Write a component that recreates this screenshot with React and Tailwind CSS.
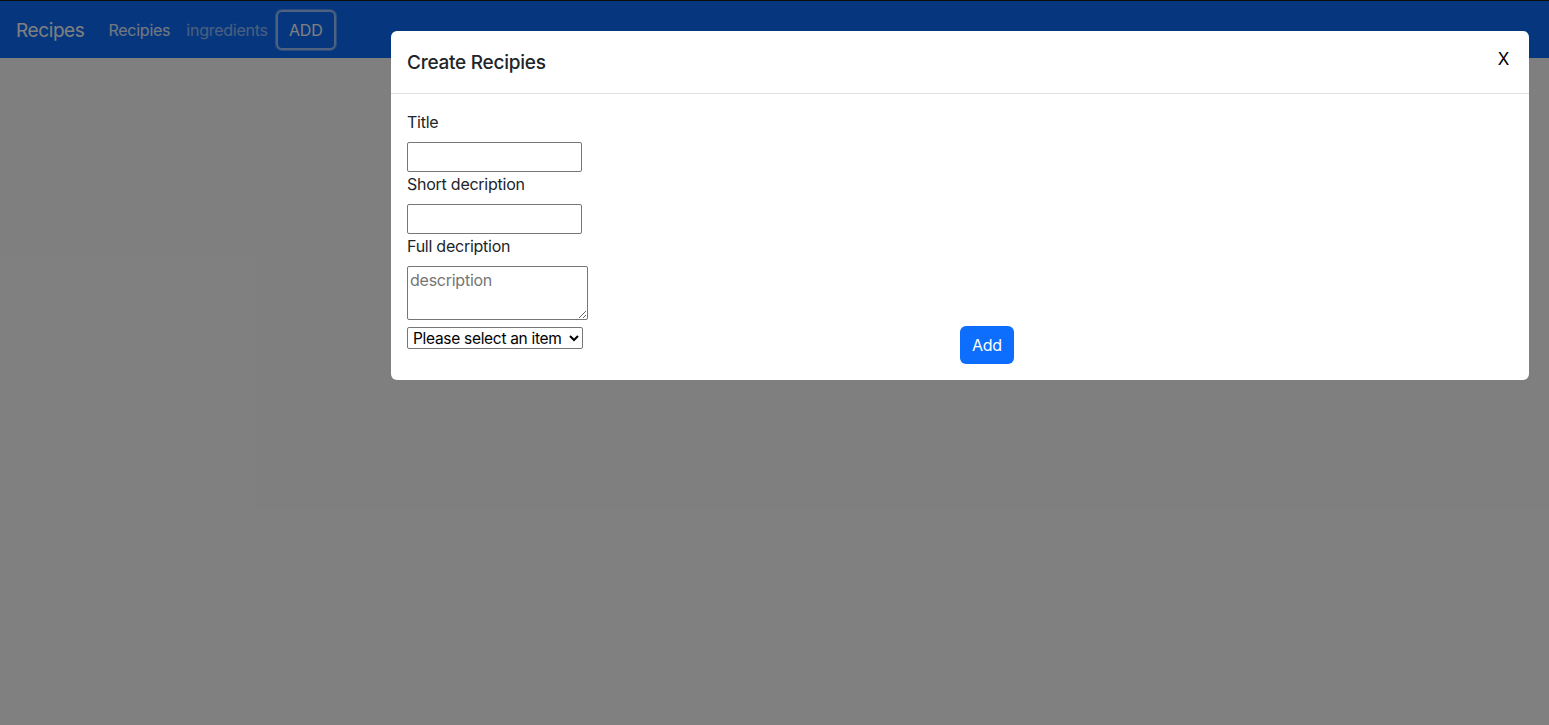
import React from 'react';

const Navbar = () => (
    <nav className="h-[58px] bg-[#0d6efd] border-t border-[#1a1a1a] flex items-center px-4">
        <span className="text-[19px] tracking-[-0.4px] text-white mr-6 pt-[3px]">Recipes</span>
        <a className="text-white/90 mr-4">Recipies</a>
        <a className="text-white/55 mr-2">ingredients</a>
        <button className="h-10 w-[60px] rounded-md border-2 border-white/60 ring-1 ring-white/30 text-white">ADD</button>
    </nav>
);

const Field = ({ label, children }) => (
    <div>
        <label className="block mb-2 leading-6">{label}</label>
        {children}
    </div>
);

export default function App() {
    return (
        <div className="relative h-[725px] bg-white overflow-hidden text-[16px] tracking-[-0.25px] text-[#212529]" style={{ fontFamily: 'Inter, "Liberation Sans", sans-serif' }}>
            <Navbar />

            {/* backdrop */}
            <div className="absolute inset-0 bg-black/50" />

            {/* modal */}
            <div className="absolute left-[391px] top-[31px] w-[1138px] bg-white rounded-md">
                <div className="flex items-start justify-between p-4 border-b border-[#dee2e6]">
                    <h5 className="text-[19px] font-medium leading-[29px] pt-[1px]">Create Recipies</h5>
                    <button className="text-[17px] leading-5 text-black mr-1 mt-[2px]">X</button>
                </div>
                <div className="p-4 grid grid-cols-2 items-end">
                    <div>
                        <Field label="Title">
                            <input className="block w-[175px] h-[30px] border border-[#767676] rounded-[2px]" />
                        </Field>
                        <Field label="Short decription">
                            <input className="block w-[175px] h-[30px] border border-[#767676] rounded-[2px]" />
                        </Field>
                        <Field label="Full decription">
                            <textarea placeholder="description" className="block w-[181px] h-[54px] border border-[#767676] rounded-[2px] px-[2px] py-[1px] placeholder:text-[#757575]" />
                        </Field>
                        <select className="block mt-[7px] mb-[15px] w-[176px] h-[22px] border border-[#767676] rounded-[2px] text-black text-[15.5px] tracking-[-0.3px] leading-5 pl-[1px]">
                            <option>Please select an item</option>
                        </select>
                    </div>
                    <div>
                        <button className="h-[38px] px-3 rounded-md bg-[#0d6efd] text-white">Add</button>
                    </div>
                </div>
            </div>
        </div>
    );
}
